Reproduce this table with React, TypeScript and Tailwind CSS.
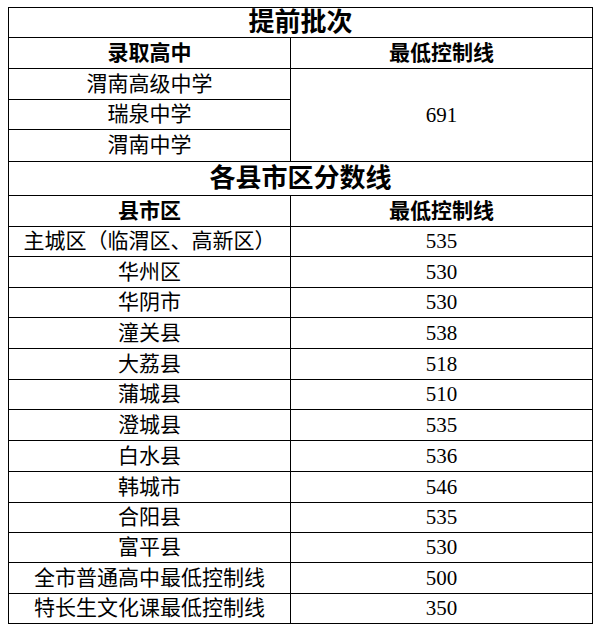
const font = {
  fontFamily: '"Liberation Serif", "Noto Sans CJK SC", serif',
};

const schools = [
  { name: "渭南高级中学", h: "h-[31px]" },
  { name: "瑞泉中学", h: "h-[30px]" },
  { name: "渭南中学", h: "h-[32px]" },
];

const counties = [
  { name: "主城区（临渭区、高新区）", score: "535", h: "h-[30px]" },
  { name: "华州区", score: "530", h: "h-[31px]" },
  { name: "华阴市", score: "530", h: "h-[30px]" },
  { name: "潼关县", score: "538", h: "h-[31px]" },
  { name: "大荔县", score: "518", h: "h-[31px]" },
  { name: "蒲城县", score: "510", h: "h-[30px]" },
  { name: "澄城县", score: "535", h: "h-[31px]" },
  { name: "白水县", score: "536", h: "h-[31px]" },
  { name: "韩城市", score: "546", h: "h-[31px]" },
  { name: "合阳县", score: "535", h: "h-[30px]" },
  { name: "富平县", score: "530", h: "h-[30px]" },
  { name: "全市普通高中最低控制线", score: "500", h: "h-[31px]" },
  { name: "特长生文化课最低控制线", score: "350", h: "h-[30px]" },
];

function Cell({
  children,
  className = "",
}: {
  children: React.ReactNode;
  className?: string;
}) {
  return (
    <div
      className={`flex items-center justify-center border-r border-b border-black ${className}`}
    >
      {children}
    </div>
  );
}

function TitleRow({ text, h }: { text: string; h: string }) {
  return (
    <Cell className={`${h} text-[26px] font-bold leading-none`}>{text}</Cell>
  );
}

function HeaderRow({ left }: { left: string }) {
  return (
    <div className="flex h-[31px] text-[21px] font-bold leading-none">
      <Cell className="w-[282px]">{left}</Cell>
      <Cell className="w-[302px]">最低控制线</Cell>
    </div>
  );
}

export default function App() {
  return (
    <div
      className="h-[632px] w-[598px] bg-white pt-[7px] pl-[8px] text-black"
      style={font}
    >
      <div className="w-[585px] border-t border-l border-black">
        <TitleRow text="提前批次" h="h-[30px]" />
        <HeaderRow left="录取高中" />
        <div className="flex text-[21px] leading-none">
          <div className="flex w-[282px] flex-col">
            {schools.map((s) => (
              <Cell key={s.name} className={s.h}>
                {s.name}
              </Cell>
            ))}
          </div>
          <Cell className="h-[93px] w-[302px]">691</Cell>
        </div>
        <TitleRow text="各县市区分数线" h="h-[34px]" />
        <HeaderRow left="县市区" />
        {counties.map((c) => (
          <div key={c.name} className="flex text-[21px] leading-none">
            <Cell className={`${c.h} w-[282px]`}>{c.name}</Cell>
            <Cell className={`${c.h} w-[302px]`}>{c.score}</Cell>
          </div>
        ))}
      </div>
    </div>
  );
}
